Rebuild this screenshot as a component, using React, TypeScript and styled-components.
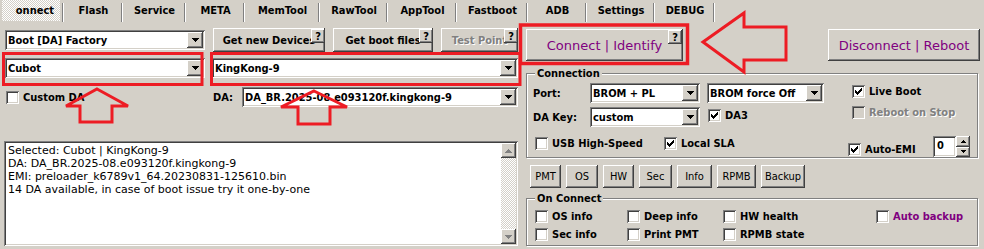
import React from 'react';
import styled, { createGlobalStyle, css } from 'styled-components';

const FONT = `"DejaVu Sans Condensed", "Liberation Sans", Arial, sans-serif`;
const WIDE_FONT = `"DejaVu Sans", Verdana, sans-serif`;
const FACE = '#d4d0c8';
const PURPLE = '#800080';
const RED = '#ed1c24';

const GlobalStyle = createGlobalStyle`
    * { box-sizing: border-box; }
    html, body { margin: 0; padding: 0; background: ${FACE}; }
    body { font-family: ${FONT}; font-size: 11px; color: #000; }
`;

const raised = css`
    background-color: ${FACE};
    box-shadow: inset -1px -1px #404040, inset 1px 1px #fff, inset -2px -2px #808080, inset 2px 2px ${FACE};
`;

const sunken = css`
    box-shadow: inset 1px 1px #808080, inset -1px -1px #fff, inset 2px 2px #404040, inset -2px -2px ${FACE};
`;

const dither = css`
    background-color: ${FACE};
    background-image: conic-gradient(#fff 25%, ${FACE} 0 50%, #fff 0 75%, ${FACE} 0);
    background-size: 2px 2px;
`;

const Page = styled.div`
    position: relative;
    width: 984px;
    height: 249px;
    overflow: hidden;
    background: ${FACE};
`;

/* ---------- tabs ---------- */

const TabBar = styled.div`
    display: flex;
    height: 22px;
    padding-left: 2px;
`;

const Tab = styled.div<{ $w: number; $active?: boolean }>`
    position: relative;
    width: ${({ $w }) => $w}px;
    display: flex;
    align-items: center;
    justify-content: center;
    font-weight: bold;
    padding-bottom: 1px;
    &::after {
        content: '';
        position: absolute;
        right: 1px;
        top: 3px;
        bottom: 0;
        width: 1px;
        background: #808080;
        box-shadow: 1px 0 #fff;
    }
    ${({ $active }) => $active && css`
        justify-content: flex-end;
        padding-right: 4px;
        ${dither};
        background-clip: content-box;
    `}
`;

const ActiveLabel = styled.span`
    margin-right: 6px;
`;

/* ---------- common widgets ---------- */

const ComboBox = styled.div<{ $w: number }>`
    display: flex;
    align-items: center;
    width: ${({ $w }) => $w}px;
    height: 20px;
    padding: 2px;
    background: #fff;
    ${sunken};
    flex: none;
`;

const ComboText = styled.span`
    flex: 1;
    padding-left: 1px;
    font-weight: bold;
    white-space: nowrap;
    overflow: hidden;
`;

const DropButton = styled.span`
    width: 16px;
    height: 16px;
    display: flex;
    align-items: center;
    justify-content: center;
    ${raised};
    flex: none;
`;

const Button = styled.div<{ $w: number; $h?: number; $plain?: boolean; $accent?: boolean; $disabled?: boolean }>`
    position: relative;
    width: ${({ $w }) => $w}px;
    height: ${({ $h }) => $h ?? 24}px;
    display: flex;
    align-items: center;
    justify-content: center;
    ${raised};
    flex: none;
    white-space: nowrap;
    font-weight: ${({ $plain }) => ($plain ? 'normal' : 'bold')};
    color: ${({ $accent, $disabled }) => ($disabled ? '#808080' : $accent ? PURPLE : '#000')};
    ${({ $disabled }) => $disabled && css`text-shadow: 1px 1px #fff;`}
    ${({ $accent }) => $accent && css`
        font-family: ${WIDE_FONT};
        font-size: 13px;
        font-weight: normal;
    `}
`;

const HelpBadge = styled.span<{ $inset?: number }>`
    position: absolute;
    top: 1px;
    right: ${({ $inset }) => $inset ?? 0}px;
    width: 14px;
    height: 14px;
    display: flex;
    align-items: center;
    justify-content: center;
    ${raised};
    color: #000;
    font-family: ${FONT};
    font-size: 11px;
    font-weight: bold;
    text-shadow: none;
`;

const CheckItem = styled.label`
    display: inline-flex;
    align-items: center;
    gap: 4px;
    height: 13px;
`;

const CheckSquare = styled.span<{ $disabled?: boolean }>`
    position: relative;
    width: 13px;
    height: 13px;
    flex: none;
    background: ${({ $disabled }) => ($disabled ? FACE : '#fff')};
    ${sunken};
    svg { position: absolute; left: 3px; top: 3px; }
`;

const CheckText = styled.span<{ $tone?: 'disabled' | 'accent' }>`
    font-weight: bold;
    white-space: nowrap;
    color: ${({ $tone }) => ($tone === 'disabled' ? '#808080' : $tone === 'accent' ? PURPLE : '#000')};
    ${({ $tone }) => $tone === 'disabled' && css`text-shadow: 1px 1px #fff;`}
`;

const FieldLabel = styled.span`
    font-weight: bold;
    white-space: nowrap;
`;

const checkPath = [2, 3, 4, 3, 2, 1, 0].map((y, i) => `M${i} ${y}h1v3h-1z`).join('');

const ArrowDown = ({ color = '#000' }: { color?: string }) => (
    <svg width="7" height="4" viewBox="0 0 7 4" shapeRendering="crispEdges">
        <path d="M0 0h7v1h-1v1h-1v1h-1v1h-1v-1h-1v-1h-1v-1h-1z" fill={color} />
    </svg>
);

const ArrowUp = ({ color = '#000' }: { color?: string }) => (
    <svg width="7" height="4" viewBox="0 0 7 4" shapeRendering="crispEdges">
        <path d="M3 0h1v1h1v1h1v1h1v1h-7v-1h1v-1h1v-1h1z" fill={color} />
    </svg>
);

const Combo = ({ value, width }: { value: string; width: number }) => (
    <ComboBox $w={width}>
        <ComboText>{value}</ComboText>
        <DropButton><ArrowDown /></DropButton>
    </ComboBox>
);

const Check = ({ label, checked, disabled, accent }: { label: string; checked?: boolean; disabled?: boolean; accent?: boolean }) => (
    <CheckItem>
        <CheckSquare $disabled={disabled}>
            {checked && (
                <svg width="7" height="7" viewBox="0 0 7 7" shapeRendering="crispEdges">
                    <path d={checkPath} fill="#000" />
                </svg>
            )}
        </CheckSquare>
        <CheckText $tone={disabled ? 'disabled' : accent ? 'accent' : undefined}>{label}</CheckText>
    </CheckItem>
);

/* ---------- layout ---------- */

const Body = styled.div`
    display: grid;
    grid-template-columns: 522px 1fr;
`;

const LeftCol = styled.div`
    display: flex;
    flex-direction: column;
    padding: 6px 0 0 5px;
`;

const ToolRow = styled.div`
    display: flex;
    align-items: center;
    gap: 8px;
    height: 24px;
`;

const DeviceRow = styled.div`
    display: flex;
    gap: 7px;
    margin-top: 6px;
`;

const DaRow = styled.div`
    display: flex;
    align-items: center;
    width: 513px;
    height: 20px;
    margin-top: 9px;
    padding-left: 1px;
`;

const DaPicker = styled.div`
    display: flex;
    align-items: center;
    gap: 9px;
    margin-left: auto;
`;

const LogBox = styled.div`
    display: flex;
    width: 514px;
    height: 105px;
    margin: 34px 0 0 -1px;
    padding: 2px;
    background: #fff;
    ${sunken};
`;

const LogText = styled.div`
    flex: 1;
    padding: 1px 0 0 2px;
    font-family: ${WIDE_FONT};
    font-size: 11px;
    line-height: 13px;
    white-space: pre;
`;

const ScrollBar = styled.div`
    width: 15px;
    display: flex;
    flex-direction: column;
`;

const ScrollButton = styled.div`
    height: 15px;
    display: flex;
    align-items: center;
    justify-content: center;
    ${raised};
`;

const ScrollTrack = styled.div`
    flex: 1;
    ${dither};
`;

const RightCol = styled.div`
    display: flex;
    flex-direction: column;
    padding: 7px 4px 0 4px;
`;

const ActionRow = styled.div`
    display: flex;
    justify-content: space-between;
    height: 32px;
`;

const GroupBox = styled.div<{ $h: number; $mt: number }>`
    position: relative;
    height: ${({ $h }) => $h}px;
    margin: ${({ $mt }) => $mt}px 2px 0 0;
    border: 1px solid #808080;
    box-shadow: inset 1px 1px #fff, 1px 1px #fff;
`;

const GroupTitle = styled.span`
    position: absolute;
    top: -7px;
    left: 8px;
    padding: 0 2px;
    line-height: 13px;
    background: ${FACE};
    font-weight: bold;
`;

const ConnLayout = styled.div`
    display: flex;
    padding: 9px 7px 0 6px;
`;

const ConnLeft = styled.div`
    width: 284px;
    display: flex;
    flex-direction: column;
`;

const ConnGrid = styled.div`
    display: grid;
    grid-template-columns: 50px 110px 117px;
    grid-auto-rows: 20px;
    column-gap: 7px;
    row-gap: 4px;
    align-items: center;
`;

const Da3Cell = styled.div`
    padding-left: 1px;
`;

const OptionRow = styled.div`
    display: grid;
    grid-template-columns: 129px auto;
    margin-top: 10px;
    padding-left: 2px;
`;

const ConnRight = styled.div`
    flex: 1;
    display: flex;
    flex-direction: column;
    margin-left: 31px;
`;

const BootCheck = styled.div<{ $mt: number }>`
    margin: ${({ $mt }) => $mt}px 0 0 4px;
`;

const EmiRow = styled.div`
    display: flex;
    align-items: flex-end;
    justify-content: space-between;
    height: 21px;
    margin-top: 14px;
    padding-bottom: 1px;
`;

const Spin = styled.div`
    display: flex;
    height: 21px;
    margin-bottom: -1px;
`;

const SpinEdit = styled.div`
    width: 23px;
    padding: 3px 0 0 4px;
    background: #fff;
    font-weight: bold;
    ${sunken};
`;

const SpinButtons = styled.div`
    width: 14px;
    display: flex;
    flex-direction: column;
`;

const SpinButton = styled.div`
    flex: 1;
    display: flex;
    align-items: center;
    justify-content: center;
    ${raised};
`;

const QuickRow = styled.div`
    display: flex;
    gap: 5px;
    margin-top: 7px;
    padding-left: 4px;
`;

const OnGrid = styled.div`
    display: grid;
    grid-template-columns: 92px 96px 153px auto;
    grid-auto-rows: 13px;
    row-gap: 5px;
    padding: 11px 0 0 8px;
`;

const Overlay = styled.svg`
    position: absolute;
    left: 0;
    top: 0;
    pointer-events: none;
`;

const tabs = [
    { label: 'onnect', w: 62, active: true },
    { label: 'Flash', w: 59 },
    { label: 'Service', w: 63 },
    { label: 'META', w: 59 },
    { label: 'MemTool', w: 75 },
    { label: 'RawTool', w: 68 },
    { label: 'AppTool', w: 69 },
    { label: 'Fastboot', w: 71 },
    { label: 'ADB', w: 59 },
    { label: 'Settings', w: 68 },
    { label: 'DEBUG', w: 60 },
];

const quickButtons = [
    { label: 'PMT', w: 31 },
    { label: 'OS', w: 32 },
    { label: 'HW', w: 31 },
    { label: 'Sec', w: 33 },
    { label: 'Info', w: 35 },
    { label: 'RPMB', w: 39 },
    { label: 'Backup', w: 44 },
];

const logLines = [
    'Selected: Cubot | KingKong-9',
    'DA: DA_BR.2025-08.e093120f.kingkong-9',
    'EMI: preloader_k6789v1_64.20230831-125610.bin',
    '14 DA available, in case of boot issue try it one-by-one',
];

const App = () => {
    return (
        <Page>
            <GlobalStyle />
            <TabBar>
                {tabs.map((t) => (
                    <Tab key={t.label} $w={t.w} $active={t.active}>
                        {t.active ? <ActiveLabel>{t.label}</ActiveLabel> : t.label}
                    </Tab>
                ))}
            </TabBar>

            <Body>
                <LeftCol>
                    <ToolRow>
                        <Combo value="Boot [DA] Factory" width={200} />
                        <Button $w={112}>Get new Devices<HelpBadge>?</HelpBadge></Button>
                        <Button $w={100}>Get boot files<HelpBadge>?</HelpBadge></Button>
                        <Button $w={77} $disabled>Test Point<HelpBadge>?</HelpBadge></Button>
                    </ToolRow>
                    <DeviceRow>
                        <Combo value="Cubot" width={200} />
                        <Combo value="KingKong-9" width={306} />
                    </DeviceRow>
                    <DaRow>
                        <Check label="Custom DA" />
                        <DaPicker>
                            <FieldLabel>DA:</FieldLabel>
                            <Combo value="DA_BR.2025-08.e093120f.kingkong-9" width={276} />
                        </DaPicker>
                    </DaRow>
                    <LogBox>
                        <LogText>{logLines.join('\n')}</LogText>
                        <ScrollBar>
                            <ScrollButton><ArrowUp color="#808080" /></ScrollButton>
                            <ScrollTrack />
                            <ScrollButton><ArrowDown color="#808080" /></ScrollButton>
                        </ScrollBar>
                    </LogBox>
                </LeftCol>

                <RightCol>
                    <ActionRow>
                        <Button $w={157} $h={32} $accent>Connect | Identify<HelpBadge $inset={1}>?</HelpBadge></Button>
                        <Button $w={152} $h={32} $accent>Disconnect | Reboot</Button>
                    </ActionRow>

                    <GroupBox $h={85} $mt={12}>
                        <GroupTitle>Connection</GroupTitle>
                        <ConnLayout>
                            <ConnLeft>
                                <ConnGrid>
                                    <FieldLabel>Port:</FieldLabel>
                                    <Combo value="BROM + PL" width={110} />
                                    <Combo value="BROM force Off" width={117} />
                                    <FieldLabel>DA Key:</FieldLabel>
                                    <Combo value="custom" width={110} />
                                    <Da3Cell><Check label="DA3" checked /></Da3Cell>
                                </ConnGrid>
                                <OptionRow>
                                    <Check label="USB High-Speed" />
                                    <Check label="Local SLA" checked />
                                </OptionRow>
                            </ConnLeft>
                            <ConnRight>
                                <BootCheck $mt={2}><Check label="Live Boot" checked /></BootCheck>
                                <BootCheck $mt={5}><Check label="Reboot on Stop" disabled /></BootCheck>
                                <EmiRow>
                                    <Check label="Auto-EMI" checked />
                                    <Spin>
                                        <SpinEdit>0</SpinEdit>
                                        <SpinButtons>
                                            <SpinButton>
                                                <svg width="5" height="3" viewBox="0 0 5 3" shapeRendering="crispEdges">
                                                    <path d="M2 0h1v1h1v1h1v1h-5v-1h1v-1h1z" fill="#000" />
                                                </svg>
                                            </SpinButton>
                                            <SpinButton>
                                                <svg width="5" height="3" viewBox="0 0 5 3" shapeRendering="crispEdges">
                                                    <path d="M0 0h5v1h-1v1h-1v1h-1v-1h-1v-1h-1z" fill="#000" />
                                                </svg>
                                            </SpinButton>
                                        </SpinButtons>
                                    </Spin>
                                </EmiRow>
                            </ConnRight>
                        </ConnLayout>
                    </GroupBox>

                    <QuickRow>
                        {quickButtons.map((b) => (
                            <Button key={b.label} $w={b.w} $h={23} $plain>{b.label}</Button>
                        ))}
                    </QuickRow>

                    <GroupBox $h={48} $mt={10}>
                        <GroupTitle>On Connect</GroupTitle>
                        <OnGrid>
                            <Check label="OS info" />
                            <Check label="Deep info" />
                            <Check label="HW health" />
                            <Check label="Auto backup" accent />
                            <Check label="Sec info" />
                            <Check label="Print PMT" />
                            <Check label="RPMB state" />
                        </OnGrid>
                    </GroupBox>
                </RightCol>
            </Body>

            {/* red annotation marks drawn over the screenshot */}
            <Overlay width="984" height="249" viewBox="0 0 984 249">
                <g fill="none" stroke={RED} strokeWidth="3" strokeLinejoin="miter">
                    <rect x="3.5" y="53.5" width="198.5" height="31" />
                    <rect x="211.5" y="53.5" width="308.5" height="31" />
                    <rect x="520.5" y="25" width="167" height="38.5" strokeWidth="3.5" />
                    <polygon points="703,42 744,13 744,27 786,27 786,60 744,60 744,72" />
                    <polygon points="97,89 128,106 112,106 112,122 80,122 80,106 66,106" />
                    <polygon points="314,91 347,107 330,107 330,124 298,124 298,107 281,107" />
                </g>
            </Overlay>
        </Page>
    );
};

export default App;
